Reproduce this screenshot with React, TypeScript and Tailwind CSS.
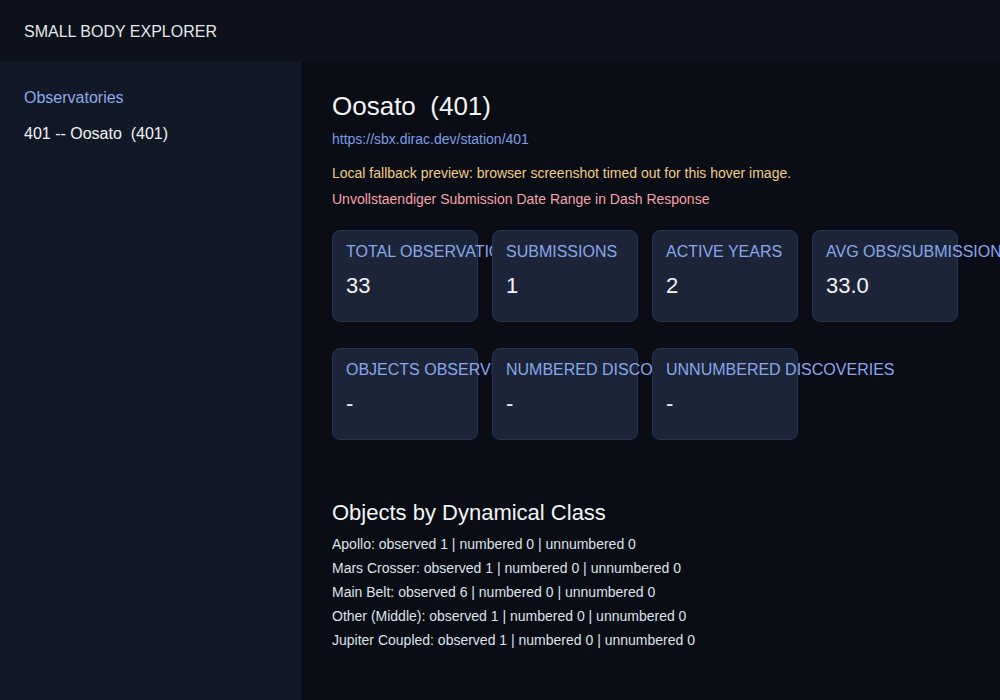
import React from 'react'

type Stat = {
  label: string
  value: string
}

const topStats: Stat[] = [
  { label: 'Total Observations', value: '33' },
  { label: 'Submissions', value: '1' },
  { label: 'Active Years', value: '2' },
  { label: 'Avg Obs/Submission', value: '33.0' },
]

const discoveryStats: Stat[] = [
  { label: 'Objects Observed', value: '-' },
  { label: 'Numbered Discoveries', value: '-' },
  { label: 'Unnumbered Discoveries', value: '-' },
]

const classRows = [
  { name: 'Apollo', observed: 1, numbered: 0, unnumbered: 0 },
  { name: 'Mars Crosser', observed: 1, numbered: 0, unnumbered: 0 },
  { name: 'Main Belt', observed: 6, numbered: 0, unnumbered: 0 },
  { name: 'Other (Middle)', observed: 1, numbered: 0, unnumbered: 0 },
  { name: 'Jupiter Coupled', observed: 1, numbered: 0, unnumbered: 0 },
]

const StatCard = ({ label, value }: Stat) => (
  <div className="relative h-[92px] w-[146px] shrink-0 rounded-lg border border-[#26354f] bg-[#1c2537] px-[13px] pt-[11px]">
    <p className="whitespace-nowrap text-[16px] leading-[20px] uppercase text-[#8aa5ee]">{label}</p>
    <p className="mt-[10px] text-[22px] leading-[28px] text-[#f3f4f6]">{value}</p>
  </div>
)

const StatRow = ({ stats }: { stats: Stat[] }) => (
  <div className="flex gap-[14px]">
    {stats.map((stat) => (
      <StatCard key={stat.label} {...stat} />
    ))}
  </div>
)

export default function App() {
  return (
    <div className="flex h-[700px] w-full flex-col overflow-hidden bg-[#0a0d15] font-['Liberation_Sans',Arial,sans-serif] text-white">
      <header className="flex h-[61px] shrink-0 items-center bg-[#0c111b] px-6 pt-[2px]">
        <h1 className="text-[16px] leading-[20px] text-[#e5e7eb]">SMALL BODY EXPLORER</h1>
      </header>

      <div className="flex min-h-0 flex-1">
        <aside className="w-[301px] shrink-0 bg-[#111826] px-6 pt-[27px]">
          <p className="text-[16px] leading-[20px] text-[#8fa9ef]">Observatories</p>
          <p className="mt-4 whitespace-pre text-[16px] leading-[20px] text-[#f3f4f6]">401 -- Oosato  (401)</p>
        </aside>

        <main className="flex-1 bg-[#0a0d15] pl-[31px] pt-[29px]">
          <h2 className="whitespace-pre text-[26px] leading-[32px] text-[#f3f4f6]">Oosato  (401)</h2>
          <a href="#" className="mt-[7px] block text-[14px] leading-[20px] text-[#7b9de6]">
            https://sbx.dirac.dev/station/401
          </a>
          <p className="mt-[14px] text-[14px] leading-[20px] text-[#f2cc85]">
            Local fallback preview: browser screenshot timed out for this hover image.
          </p>
          <p className="mt-[6px] text-[14px] leading-[20px] text-[#f4a3a8]">
            Unvollstaendiger Submission Date Range in Dash Response
          </p>

          <div className="mt-[21px] flex flex-col gap-[26px]">
            <StatRow stats={topStats} />
            <StatRow stats={discoveryStats} />
          </div>

          <h3 className="mt-[59px] text-[22px] leading-[28px] text-[#f3f4f6]">Objects by Dynamical Class</h3>
          <ul className="mt-[5px]">
            {classRows.map((row) => (
              <li key={row.name} className="text-[14px] leading-[24px] text-[#dde2ea]">
                {row.name}: observed {row.observed} | numbered {row.numbered} | unnumbered {row.unnumbered}
              </li>
            ))}
          </ul>
        </main>
      </div>
    </div>
  )
}
